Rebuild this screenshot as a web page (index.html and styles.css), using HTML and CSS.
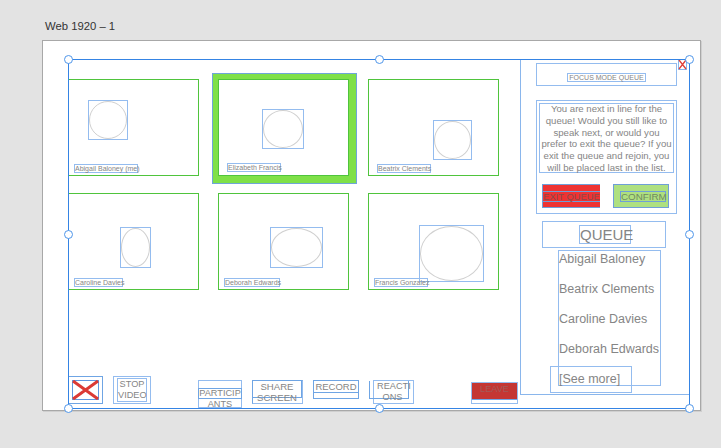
FILE: index.html

```html
<!DOCTYPE html>
<html lang="en">
<head>
  <meta charset="UTF-8">
  <title>Web 1920 – 1</title>
  <link rel="stylesheet" href="styles.css">
</head>
<body>
<div class="board-title">Web 1920 – 1</div>
<div class="artboard">
  <div class="frame">
    <div class="main">
      <div class="tiles">
        <div class="tile">
          <div class="face face-a"><i></i></div>
          <div class="name name-a">Abigail Baloney (me)</div>
        </div>
        <div class="tile-active">
          <div class="tile">
            <div class="face face-b"><i></i></div>
            <div class="name name-b">Elizabeth Francis</div>
          </div>
        </div>
        <div class="tile">
          <div class="face face-c"><i></i></div>
          <div class="name name-c">Beatrix Clements</div>
        </div>
        <div class="tile">
          <div class="face face-d"><i></i></div>
          <div class="name name-d">Caroline Davies</div>
        </div>
        <div class="tile">
          <div class="face face-e"><i></i></div>
          <div class="name name-e">Deborah Edwards</div>
        </div>
        <div class="tile">
          <div class="face face-f"><i></i></div>
          <div class="name name-f">Francis Gonzalez</div>
        </div>
      </div>

      <div class="toolbar">
        <div class="tool tool-mute">
          <svg width="27" height="20" viewBox="0 0 27 20">
            <rect x="0.5" y="0.5" width="26" height="19" fill="none" stroke="#5f97e0"/>
            <path d="M1 1L26 19M26 1L1 19" stroke="#dc3a35" stroke-width="3"/>
          </svg>
        </div>
        <div class="tool tool-video"><span>STOP VIDEO</span></div>
        <div class="tool tool-people"><span class="band">PARTICIP</span><span>ANTS</span></div>
        <div class="tool tool-share"><span>SHARE<br>SCREEN</span></div>
        <div class="tool tool-record"><span>RECORD</span></div>
        <div class="tool tool-react"><span>REACTI<br>ONS</span></div>
        <div class="tool tool-leave"><span>LEAVE</span></div>
      </div>
    </div>

    <div class="side">
      <div class="close-x">
        <svg width="9" height="11" viewBox="0 0 9 11">
          <rect x="0.5" y="0.5" width="8" height="10" fill="none" stroke="#8ab6ec"/>
          <path d="M1 1L8 10M8 1L1 10" stroke="#e0403a" stroke-width="1.3"/>
        </svg>
      </div>
      <div class="side-head"><span>FOCUS MODE QUEUE</span></div>
      <div class="exit-panel">
        <div class="exit-text"><p>You are next in line for the queue! Would you still like to speak next, or would you prefer to exit the queue? If you exit the queue and rejoin, you will be placed last in the list.</p></div>
        <div class="exit-actions">
          <div class="btn btn-exit"><span>EXIT QUEUE</span></div>
          <div class="btn btn-confirm"><span>CONFIRM</span></div>
        </div>
      </div>
      <div class="queue-head"><span>QUEUE</span></div>
      <ul class="queue-list">
        <li>Abigail Baloney</li>
        <li>Beatrix Clements</li>
        <li>Caroline Davies</li>
        <li>Deborah Edwards</li>
        <li class="see-more">[See more]</li>
      </ul>
    </div>

    <span class="handle h-tl"></span>
    <span class="handle h-tc"></span>
    <span class="handle h-tr"></span>
    <span class="handle h-ml"></span>
    <span class="handle h-mr"></span>
    <span class="handle h-bl"></span>
    <span class="handle h-bc"></span>
    <span class="handle h-br"></span>
  </div>
</div>
</body>
</html>
```

FILE: styles.css

```css
* {
  box-sizing: border-box;
}
body {
  margin: 0;
  width: 721px;
  height: 448px;
  overflow: hidden;
  background: #e3e3e3;
  font-family: "Liberation Sans", Arial, sans-serif;
  color: #858585;
}
.board-title {
  height: 40px;
  padding: 20px 0 0 45px;
  font-size: 11.3px;
  line-height: 13px;
  color: #333;
}
.artboard {
  width: 659px;
  height: 371px;
  margin-left: 42px;
  padding: 18px 0 0 25px;
  background: #fff;
  border: 1px solid #a8a8a8;
  box-shadow: 1px 1px 0 #cfcfcf;
}

/* selection frame */
.frame {
  position: relative;
  display: flex;
  width: 622px;
  height: 350px;
}
.frame::after {
  content: "";
  position: absolute;
  inset: 0;
  border: 1px solid #3584e4;
  pointer-events: none;
}
.handle {
  position: absolute;
  z-index: 2;
  width: 9px;
  height: 9px;
  margin: -4px 0 0 -4px;
  background: #fff;
  border: 1px solid #4f96ea;
  border-radius: 50%;
}
.h-tl { left: 0; top: 0; }
.h-tc { left: 311px; top: 0; }
.h-tr { left: 621px; top: 0; }
.h-ml { left: 0; top: 175px; }
.h-mr { left: 621px; top: 175px; }
.h-bl { left: 0; top: 349px; }
.h-bc { left: 311px; top: 349px; }
.h-br { left: 621px; top: 349px; }

.main {
  width: 452px;
  flex: none;
}

/* video tiles */
.tiles {
  display: grid;
  grid-template-columns: repeat(3, 131px);
  grid-auto-rows: 97px;
  column-gap: 19px;
  row-gap: 17px;
  padding-top: 20px;
}
.tile {
  display: flex;
  flex-direction: column;
  align-items: flex-start;
  height: 97px;
  background: #fff;
  border: 1px solid #4fc43c;
}
.tile-active {
  margin: -6px -8px -8px -6px;
  padding: 5px 7px 7px 5px;
  background: #7fe048;
  border: 1px solid #6fa5d8;
}
.face {
  flex: none;
  background: #fff;
  border: 1px solid #94bcef;
}
.face i {
  display: block;
  width: 100%;
  height: 100%;
  border: 1px solid #d0d0d0;
  border-radius: 50%;
}
.face-a { width: 40px; height: 40px; margin: 20px 0 0 19px; }
.face-b { width: 42px; height: 40px; margin: 29px 0 0 43px; }
.face-c { width: 39px; height: 40px; margin: 40px 0 0 64px; }
.face-d { width: 31px; height: 41px; margin: 33px 0 0 51px; }
.face-e { width: 53px; height: 41px; margin: 33px 0 0 51px; }
.face-f { width: 65px; height: 57px; margin: 31px 0 -10px 50px; }
.name {
  height: 9px;
  font-size: 7px;
  line-height: 8px;
  white-space: nowrap;
  border: 1px solid #94bcef;
}
.name-a { width: 64px; margin: auto 0 2px 5px; }
.name-b { width: 54px; margin: auto 0 3px 8px; }
.name-c { width: 54px; margin: auto 0 2px 8px; }
.name-d { width: 49px; margin: auto 0 2px 5px; }
.name-e { width: 56px; margin: auto 0 2px 5px; }
.name-f { width: 54px; margin: auto 0 2px 5px; }

/* bottom controls */
.toolbar {
  display: flex;
  align-items: flex-start;
  height: 33px;
  margin-top: 86px;
  font-size: 9.2px;
  line-height: 11px;
  text-align: center;
}
.tool {
  flex: none;
  border: 1px solid #94bcef;
}
.tool span {
  display: block;
  white-space: nowrap;
}
.tool-mute {
  width: 35px;
  height: 28px;
  padding: 3px 0 0 3px;
  border-color: #6fa5e4;
}
.tool-mute svg {
  display: block;
}
.tool-video {
  width: 38px;
  height: 28px;
  margin-left: 10px;
  padding: 1px 3px;
}
.tool-video span {
  height: 24px;
  white-space: normal;
  border: 1px solid #94bcef;
}
.tool-people {
  width: 44px;
  height: 28px;
  margin: 4px 0 0 47px;
}
.tool-people .band {
  height: 11px;
  margin: 7px -1px 0;
  line-height: 9px;
  border: 1px solid #6fa5e4;
}
.tool-people span {
  line-height: 11px;
}
.tool-share {
  width: 51px;
  height: 24px;
  margin: 4px 0 0 10px;
  font-size: 9.6px;
  border-top-color: #6fa5e4;
  border-left-color: #6fa5e4;
}
.tool-share span {
  height: 17px;
  border: 1px solid #6fa5e4;
  border-width: 0 1px 1px 0;
}
.tool-record {
  width: 46px;
  height: 19px;
  margin: 4px 0 0 10px;
  font-size: 9.5px;
  border-color: #6fa5e4;
}
.tool-record span {
  height: 12px;
  border-bottom: 1px solid #6fa5e4;
}
.tool-react {
  width: 41px;
  height: 24px;
  margin: 4px 0 0 14px;
}
.tool-react span {
  width: 40px;
  height: 18px;
  margin-left: -5px;
  padding-left: 7px;
  border: 1px solid #6fa5e4;
  border-top: 0;
}
.tool-leave {
  width: 47px;
  height: 22px;
  margin: 6px 0 0 57px;
}
.tool-leave span {
  height: 17px;
  background: #c43633;
  color: #a35a58;
  line-height: 13px;
  border-bottom: 1px solid #6fa5e4;
}

/* queue panel */
.side {
  position: relative;
  display: flex;
  flex-direction: column;
  align-items: flex-start;
  width: 170px;
  height: 336px;
  padding: 3px 0 0 15px;
  border: 1px solid #8ab6ec;
}
.close-x {
  position: absolute;
  right: 2px;
  top: -1px;
  line-height: 0;
}
.side-head {
  display: flex;
  justify-content: center;
  align-items: flex-end;
  width: 141px;
  height: 23px;
  padding-bottom: 3px;
  border: 1px solid #94bcef;
}
.side-head span {
  height: 9px;
  padding: 0 1px;
  font-size: 7px;
  line-height: 8px;
  border: 1px solid #94bcef;
}
.exit-panel {
  width: 141px;
  height: 114px;
  margin-top: 14px;
  padding: 2px 2px 0;
  border: 1px solid #94bcef;
}
.exit-text {
  height: 70px;
  font-size: 9.6px;
  line-height: 11.8px;
  text-align: center;
  border: 1px solid #94bcef;
}
.exit-text p {
  margin: -1px 0 0;
}
.exit-actions {
  display: flex;
  gap: 13px;
  margin: 11px 0 0 3px;
}
.btn {
  display: flex;
  flex: none;
  align-items: center;
  height: 24px;
  font-size: 9.4px;
  white-space: nowrap;
  border: 1px solid #6f9fd8;
}
.btn span {
  height: 11px;
  margin-top: 1px;
  line-height: 9px;
  border: 1px solid #6f9fd8;
}
.btn-exit {
  width: 58px;
  background: #ee3333;
  color: #8a4a48;
  border-right: 0;
}
.btn-exit span {
  width: 100%;
  border-width: 1px 0;
  text-align: center;
}
.btn-confirm {
  width: 56px;
  padding-left: 6px;
  background: #aee080;
  color: #6f8a60;
  font-size: 9.8px;
}
.btn-confirm span {
  width: 46px;
  text-align: center;
}
.queue-head {
  display: flex;
  justify-content: center;
  align-items: center;
  width: 124px;
  height: 27px;
  margin: 7px 0 0 6px;
  padding-left: 2px;
  border: 1px solid #94bcef;
}
.queue-head span {
  width: 52px;
  height: 19px;
  font-size: 15px;
  line-height: 17px;
  text-align: center;
  border: 1px solid #94bcef;
}
.queue-list {
  display: flex;
  flex-direction: column;
  gap: 12px;
  width: 103px;
  height: 136px;
  margin: 2px 0 0 22px;
  padding: 0;
  list-style: none;
  font-size: 12.5px;
  line-height: 18px;
  white-space: nowrap;
  border: 1px solid #94bcef;
}
.queue-list li:first-child {
  margin-top: -1px;
}
.see-more {
  position: relative;
}
.see-more::after {
  content: "";
  position: absolute;
  left: -9px;
  top: -4px;
  width: 80px;
  height: 25px;
  border: 1px solid #94bcef;
}
```
